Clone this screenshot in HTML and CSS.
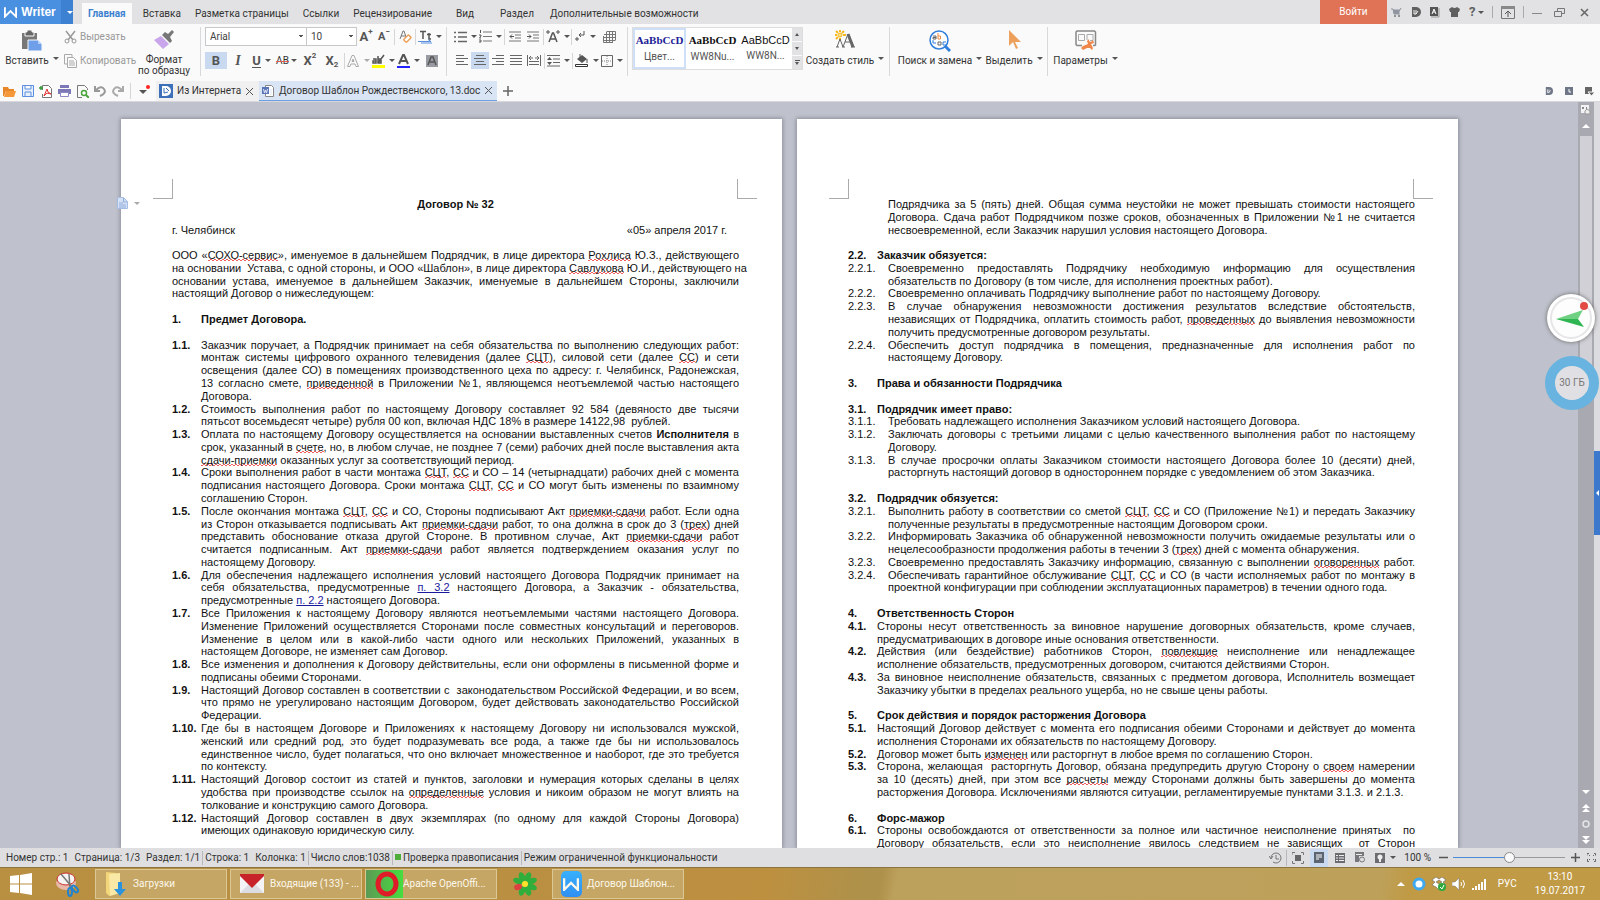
FILE: index.html
```html
<!DOCTYPE html>
<html lang="ru">
<head>
<meta charset="utf-8">
<title>Договор Шаблон Рождественского, 13.doc - Writer</title>
<link rel="stylesheet" href="styles.css">
</head>
<body>
<svg class="defs" aria-hidden="true">
  <symbol id="w" viewBox="0 0 14 12"><path d="M1 1v10L7 5l6 6V1" fill="none" stroke="currentColor" stroke-width="2"/></symbol>
  <symbol id="d" viewBox="0 0 10 10"><path d="M1 0h4a5 5 0 0 1 0 10H1z" fill="currentColor"/><path d="M3 3v4h2l2-3M5 3v4" fill="none" stroke="#eee"/></symbol>
</svg>

<header class="titlebar">
  <button class="brand"><svg width="13" height="12"><use href="#w"/></svg><span>Writer</span><i class="caret"></i></button>
  <nav class="tabs">
    <button class="tab active">Главная</button>
    <button class="tab">Вставка</button>
    <button class="tab">Разметка страницы</button>
    <button class="tab">Ссылки</button>
    <button class="tab">Рецензирование</button>
    <button class="tab wide">Вид</button>
    <button class="tab wide">Раздел</button>
    <button class="tab">Дополнительные возможности</button>
  </nav>
  <button class="login">Войти</button>
  <div class="window">
    <button aria-label="Магазин"><svg width="11" height="11" viewBox="0 0 11 11"><path d="M0 2h2l1 5h6M2 3h7l1-2" fill="none" stroke="#9095a0"/><path d="M2 3h7L8 7H3z" fill="#9095a0"/><circle cx="4" cy="9" r="1" fill="#777"/><circle cx="8" cy="9" r="1" fill="#777"/></svg></button>
    <button aria-label="Docer"><svg width="10" height="10"><use href="#d"/></svg></button>
    <button aria-label="Словарь"><svg width="10" height="11" viewBox="0 0 10 11"><path d="M0 0h8v9H0z" fill="#555"/><path d="M9 1v9H1" fill="none" stroke="#999"/><path d="M2 7l2-5 2 5M3 5h2" fill="none" stroke="#fff"/></svg></button>
    <button aria-label="Тема"><svg width="11" height="10" viewBox="0 0 11 10"><path d="M3 0Q5.500 2 8 0l3 2-1 3H9v5H2V5H1L0 2z" fill="#606060"/></svg></button>
    <button aria-label="Справка" class="help"><b>?</b><i class="caret"></i></button>
    <span class="bar"></span>
    <button aria-label="Скрыть ленту"><svg width="14" height="13" viewBox="0 0 14 13"><path d="M.5.5h13v12H.5z" fill="none" stroke="#777"/><path d="M0 0h14v3H0z" fill="#888"/><path d="M7 11V5M4 8l3-3 3 3" fill="none" stroke="#555"/></svg></button>
    <span class="bar"></span>
    <button aria-label="Свернуть"><svg width="10" height="10"><path d="M0 6.500h10" stroke="#888"/></svg></button>
    <button aria-label="Восстановить" class="restore"><svg width="11" height="9" viewBox="0 0 11 9"><path d="M.5 3.500h7v5h-7zM3.500 3V.5h7v5H8" fill="none" stroke="#777"/></svg></button>
    <button aria-label="Закрыть" class="close"><svg width="9" height="9"><path d="M1 1l7 7M8 1L1 8" stroke="#666" stroke-width="1.500"/></svg></button>
  </div>
</header>

<section class="ribbon">
  <button class="big paste"><svg width="22" height="22" viewBox="0 0 22 22"><path d="M1 3h15v16H1z" fill="#777"/><path d="M4 2h2V0h5v2h2v4H4z" fill="#666" stroke="#fafafa"/><path d="M7 10h10l4 4v7H7z" fill="#6f9fe8" stroke="#fafafa"/><path d="M17 10v4h4" fill="#b8d0f5"/></svg><span>Вставить<i class="caret up"></i></span></button>
  <div class="stack">
    <button class="off"><svg width="13" height="14" viewBox="0 0 13 14"><path d="M2 1l7 9M11 1L4 10" stroke="#999" stroke-width="1.500"/><circle cx="3" cy="11" r="2" fill="none" stroke="#999"/><circle cx="10" cy="11" r="2" fill="none" stroke="#999"/></svg>Вырезать</button>
    <button class="off"><svg width="13" height="14" viewBox="0 0 13 14"><path d="M3 10H.5V.5H8V3M3.500 3.500h6l3 3v7h-9zM5 7h5M5 9h6M5 11h6" fill="none" stroke="#aaa"/></svg>Копировать</button>
  </div>
  <button class="big painter"><svg width="20" height="20" viewBox="0 0 20 20"><path d="M8 5l3-3 3 2 4-4 2 2-4 5 2 4-2 2z" fill="#777"/><path d="M7 6l8 8-6 5L0 10z" fill="#c9a5ec"/></svg><span>Формат<br>по образцу</span></button>
  <hr>
  <div class="rows">
    <div class="row">
      <select class="font" aria-label="Шрифт"><option>Arial</option></select><select class="size" aria-label="Размер"><option>10</option></select>
      <button class="t glyph" aria-label="Увеличить">A<sup>+</sup></button>
      <button class="t glyph small" aria-label="Уменьшить">A<sup>−</sup></button>
      <span class="bar"></span>
      <button class="t" aria-label="Очистить"><svg width="13" height="14" viewBox="0 0 13 14"><path d="M1 9l3-8h1l2 6M2 6h4" fill="none" stroke="#777"/><rect x="5" y="7" width="7" height="4" rx="1" transform="rotate(-45 8 9)" fill="#fff" stroke="#eda15a" stroke-width="1.500"/></svg></button>
      <span class="bar"></span>
      <button class="d" aria-label="Регистр"><svg width="14" height="14" viewBox="0 0 14 14"><path d="M2 1.500h6M5 1v8M11 3v6h2M9 4.500h4" fill="none" stroke="#555" stroke-width="1.500"/><path d="M0 11.500h13l-3-2M14 13H3" fill="none" stroke="#5a90dc"/></svg><i class="caret"></i></button>
    </div>
    <div class="row">
      <button class="n on glyph" aria-label="Полужирный">B</button>
      <button class="n glyph it-g" aria-label="Курсив">I</button>
      <button class="d glyph" aria-label="Подчёркнутый"><span class="under">U</span><i class="caret"></i></button>
      <button class="d strike" aria-label="Зачёркнутый"><s>AB</s><i class="caret"></i></button>
      <button class="n glyph" aria-label="Надстрочный">X<sup>2</sup></button>
      <button class="n glyph" aria-label="Подстрочный">X<sub>2</sub></button>
      <span class="bar"></span>
      <button class="d" aria-label="Эффекты"><svg width="13" height="12" viewBox="0 0 13 12"><path d="M.5 11.500l4.500-11h2l4.500 11H9L8 9H4l-1 2.500zM5 6.500h2L6 4z" fill="none" stroke="#aaa"/></svg><i class="caret pale"></i></button>
      <button class="d" aria-label="Выделение цветом"><svg width="13" height="14" viewBox="0 0 13 14"><path d="M0 11h13v3H0z" fill="#ff0"/><path d="M1 5h3v4H1V7h3M6 2v7h3V5H6M12 1L6 9" fill="none" stroke="#555" stroke-width="1.500"/></svg><i class="caret"></i></button>
      <button class="d" aria-label="Цвет текста"><svg width="13" height="14" viewBox="0 0 13 14"><path d="M0 12h13v2H0z" fill="#22f"/><path d="M2 10l4-9h1l4 9M4 7h5" fill="none" stroke="#555" stroke-width="2"/></svg><i class="caret"></i></button>
      <button class="n" aria-label="Заливка текста"><svg width="12" height="12" viewBox="0 0 12 12"><path d="M0 0h12v12H0z" fill="#999ba3"/><path d="M2 10l3-8h2l3 8M4 7h4" fill="none" stroke="#555" stroke-width="1.500"/></svg></button>
    </div>
  </div>
  <hr>
  <div class="rows">
    <div class="row">
      <button class="d" aria-label="Маркеры"><svg width="13" height="12" viewBox="0 0 13 12"><path d="M4 1.500h9M4 6h9M4 10.500h9M0 1.500h2M0 6h2M0 10.500h2" stroke="#666" stroke-width="1.500"/></svg><i class="caret"></i></button>
      <button class="d" aria-label="Нумерация"><svg width="13" height="13" viewBox="0 0 13 13"><path d="M4 2h9M4 6.500h9M4 11h9" stroke="#777"/><path d="M1.500 0v3M0 5h2v1L.5 8H2M0 10h2v2H0" fill="none" stroke="#555"/></svg><i class="caret"></i></button>
      <span class="bar"></span>
      <button class="t" aria-label="Уменьшить отступ"><svg width="12" height="12" viewBox="0 0 12 12"><path d="M0 1h12M6 4h6M6 7h6M0 10h12" stroke="#777"/><path d="M5 5.500H1M3 3.500l-2 2 2 2" fill="none" stroke="#555"/></svg></button>
      <button class="t" aria-label="Увеличить отступ"><svg width="12" height="12" viewBox="0 0 12 12"><path d="M0 1h12M6 4h6M6 7h6M0 10h12" stroke="#777"/><path d="M0 5.500h4M2 3.500l2 2-2 2" fill="none" stroke="#555"/></svg></button>
      <span class="bar"></span>
      <button class="d" aria-label="Макет текста"><svg width="14" height="13" viewBox="0 0 14 13"><path d="M3 12L6.500 3h1L11 12M4.500 9h5" fill="none" stroke="#555" stroke-width="1.500"/><path d="M0 2h4M2 0v4M10 2h4M12 0v4" stroke="#555"/></svg><i class="caret"></i></button>
      <span class="bar"></span>
      <button class="d" aria-label="Знаки абзаца"><svg width="11" height="12" viewBox="0 0 11 12"><path d="M9 0v4H4M6 2L4 4l2 2M0 8h4M2 6v4" fill="none" stroke="#555"/></svg><i class="caret"></i></button>
      <button class="n" aria-label="Таблица"><svg width="13" height="12" viewBox="0 0 13 12"><path d="M3.500.5h9v9M1 3.500h11M0 6.500h12M0 9.500h12M3.500 1v10M6.500 1v10M9.500 1v10M.5 5v6.500H10" fill="none" stroke="#777"/></svg></button>
    </div>
    <div class="row">
      <button class="t" aria-label="По левому краю"><svg width="12" height="11" viewBox="0 0 12 11"><path d="M0 .5h8M0 3.500h12M0 6.500h8M0 9.500h12" stroke="#666"/></svg></button>
      <button class="t on" aria-label="По центру"><svg width="12" height="11" viewBox="0 0 12 11"><path d="M2 .5h8M0 3.500h12M2 6.500h8M0 9.500h12" stroke="#666"/></svg></button>
      <button class="t" aria-label="По правому краю"><svg width="12" height="11" viewBox="0 0 12 11"><path d="M4 .5h8M0 3.500h12M4 6.500h8M0 9.500h12" stroke="#666"/></svg></button>
      <button class="t" aria-label="По ширине"><svg width="12" height="11" viewBox="0 0 12 11"><path d="M0 .5h12M0 3.500h12M0 6.500h12M0 9.500h12" stroke="#666"/></svg></button>
      <button class="t" aria-label="Распределить"><svg width="14" height="11" viewBox="0 0 14 11"><path d="M.5 0v11M13.500 0v11M2 6.500h10M2 9.500h10M2 3h4M8 3h4M4 1L2 3l2 2M10 1l2 2-2 2" fill="none" stroke="#666"/></svg></button>
      <span class="bar"></span>
      <button class="d" aria-label="Интервал"><svg width="13" height="12" viewBox="0 0 13 12"><path d="M0 .5h13M6 4h7M6 7.500h7M0 11h13" stroke="#666"/><path d="M0 5l2.500-3L5 5zM0 7l2.500 3L5 7z" fill="#555"/></svg><i class="caret"></i></button>
      <span class="bar"></span>
      <button class="d" aria-label="Заливка"><svg width="14" height="13" viewBox="0 0 14 13"><path d="M2 5l5-4 5 4-5 4z" fill="#555"/><path d="M12 5v4M5 3V0" stroke="#555"/><path d="M.5 10.500h12v2H.5z" fill="#fff" stroke="#333"/></svg><i class="caret"></i></button>
      <button class="d" aria-label="Границы"><svg width="12" height="12" viewBox="0 0 12 12"><path d="M.5.5h11v11H.5z" fill="none" stroke="#666"/><path d="M6 1v10M1 6h10" stroke="#888" stroke-dasharray="1 1"/></svg><i class="caret"></i></button>
    </div>
  </div>
  <hr>
  <div class="gallery">
    <button class="style chosen"><b class="navy">AaBbCcD</b><span>Цвет...</span></button>
    <button class="style"><b>AaBbCcD</b><span>WW8Nu...</span></button>
    <button class="style"><b class="sans">AaBbCcD</b><span>WW8N...</span></button>
    <div class="spin"><button aria-label="Вверх"><i class="caret flip"></i></button><button aria-label="Вниз"><i class="caret"></i></button><button aria-label="Все стили" class="more"><i class="caret"></i></button></div>
  </div>
  <button class="big create"><svg width="20" height="20" viewBox="0 0 20 20"><path d="M5 0v2M5 8v3M0 5h2M8 5h3M1 1l2 2M9 1L7 3M1 9l2-2" stroke="#f6b81c" stroke-width="2"/><circle cx="5" cy="5" r="2" fill="#fbe08a" stroke="#f6b81c"/><path d="M2 17l3-8 3 8M8 17l5-13 6 13M10 12h6M1 17h3M7 17h3M16 17h4" fill="none" stroke="#666"/><path d="M13 4l5 13" stroke="#666" stroke-width="3"/></svg><span>Создать стиль<i class="caret up"></i></span></button>
  <hr>
  <button class="big find"><svg width="22" height="22" viewBox="0 0 22 22"><circle cx="10" cy="10" r="9" fill="#fff" stroke="#2f7fdc" stroke-width="1.500"/><path d="M16 16l5 5" stroke="#2f7fdc" stroke-width="3"/><path d="M4 6h3v3H4V7.500h3M9 15v-3h3v3H9" fill="none" stroke="#666"/><path d="M9 3v6h2.500V6H9" fill="none" stroke="#e98b45"/><path d="M4 10v3h3M17 12h-3v3h3" fill="none" stroke="#2f7fdc"/></svg><span>Поиск и замена<i class="caret up"></i></span></button>
  <button class="big select"><svg width="13" height="20" viewBox="0 0 13 20"><path d="M1 0v16l4-4 3 7 2-1-3-6h6z" fill="#eda05c"/></svg><span>Выделить<i class="caret up"></i></span></button>
  <hr>
  <button class="big params"><svg width="22" height="20" viewBox="0 0 22 20"><path d="M7 15.500H2l-1-1V2l1-1h17.500l1 1v13l-1 .5H18" fill="none" stroke="#888" stroke-width="1.500"/><path d="M3.500 4.500h6v6h-6zM12 10V4.500h6v6h-3" fill="none" stroke="#aaa"/><path d="M14 9l-2 2 1 3-5 2-2 2 2 2 4-2 3 0 2 2 1-2-2-4 3-1-1-3-2 2-2-1z" fill="#f0874a"/></svg><span>Параметры<i class="caret up"></i></span></button>
</section>

<section class="docbar">
  <div class="quick">
    <button aria-label="Открыть"><svg width="13" height="11" viewBox="0 0 13 11"><path d="M0 1h5l1 2h5v2H3L1 10H0z" fill="#e8872a"/><path d="M3 5h10l-2 6H1z" fill="#f5983a"/></svg></button>
    <button aria-label="Сохранить"><svg width="12" height="12" viewBox="0 0 12 12"><path d="M.5.5h11v11H.5zM3 1v3h6V1M3 11V7h6v4" fill="#e8f0fc" stroke="#5b90e0"/></svg></button>
    <button aria-label="PDF"><svg width="13" height="13" viewBox="0 0 13 13"><path d="M3.500 5V.5h6l3 3v9h-9V9" fill="#fff" stroke="#777"/><path d="M5 11l3-7 1 3 3 2-4-1z" fill="none" stroke="#e03030"/><path d="M0 3h4M2 1v4" stroke="#3a9b3a" stroke-width="1.500"/></svg></button>
    <button aria-label="Печать"><svg width="13" height="12" viewBox="0 0 13 12"><path d="M2 0h9v3H2zM0 4h13v5H0z" fill="#7c78b8"/><path d="M2.500 7.500h8v4h-8z" fill="#fff" stroke="#8d89c4"/></svg></button>
    <button aria-label="Просмотр"><svg width="12" height="13" viewBox="0 0 12 13"><path d="M5 12.500H.5V.5h7l3 3V5" fill="none" stroke="#777"/><circle cx="7" cy="8" r="2.500" fill="#fff" stroke="#4aa53c" stroke-width="1.500"/><path d="M9 10l3 3" stroke="#4aa53c" stroke-width="2"/></svg></button>
    <button aria-label="Отменить"><svg width="12" height="12" viewBox="0 0 12 12"><path d="M1 1v5h5M2 5q5-5 8-1t-4 7" fill="none" stroke="#999" stroke-width="2"/></svg></button>
    <button aria-label="Повторить"><svg width="12" height="12" viewBox="0 0 12 12"><path d="M11 1v5H6M10 5Q5 0 2 4t4 7" fill="none" stroke="#aaa" stroke-width="2"/></svg></button>
    <span class="bar"></span>
    <button aria-label="Ещё"><svg width="12" height="12" viewBox="0 0 12 12"><path d="M1 5h8L5 9z" fill="#555"/><circle cx="10" cy="2" r="2" fill="#f22"/></svg></button>
  </div>
  <div class="doc web"><svg width="14" height="14" viewBox="0 0 14 14"><path d="M0 0h14v14H0z" fill="#3d70b8"/><path d="M3 2h4a5 5 0 0 1 0 10H3z" fill="#fff"/><path d="M5 4v5l4-1M7 4l3 3" fill="none" stroke="#3d70b8"/></svg><span>Из Интернета</span><button aria-label="Закрыть вкладку"><svg width="7" height="7"><path d="M0 0l7 7M7 0L0 7" stroke="#555"/></svg></button></div>
  <div class="doc current"><svg width="12" height="12" viewBox="0 0 12 12"><path d="M3.500.5h6l2 2v9h-8z" fill="#fff" stroke="#888"/><path d="M0 2h7v7H0z" fill="#5b76b8"/><path d="M1.500 4l1 4 1-3 1 3 1-4M8 5h2M8 7h2M8 9h2" fill="none" stroke="#dfe6f6"/></svg><span>Договор Шаблон Рождественского, 13.doc</span><button aria-label="Закрыть вкладку"><svg width="7" height="7"><path d="M0 0l7 7M7 0L0 7" stroke="#555"/></svg></button></div>
  <button class="add" aria-label="Новая вкладка"><svg width="10" height="10"><path d="M0 5h10M5 0v10" stroke="#666" stroke-width="1.500"/></svg></button>
  <div class="side">
    <button aria-label="Docer"><svg width="8" height="8"><use href="#d"/></svg></button>
    <button aria-label="История"><svg width="8" height="8"><path d="M0 0h8v8H0z" fill="#6e7688"/><path d="M4 2v3h2" fill="none" stroke="#fff"/></svg></button>
    <button aria-label="Список"><svg width="10" height="9"><path d="M0 0h7v5H4v2H0z" fill="#666"/><path d="M3 5h7L6.500 9z" fill="#666" stroke="#fafafa"/></svg></button>
  </div>
</section>

<main class="work">
  <div class="canvas">
    <article class="page">
      <div class="mark tl"></div><div class="mark tr"></div>
      <button class="opts" aria-label="Параметры раздела"><svg width="11" height="12" viewBox="0 0 11 12"><path d="M.5.5h6l4 4v7H.5z" fill="#d5e2f6" stroke="#a5bde4"/><path d="M2 6h4M2 8h7M2 10h7M6.500 1v4H10" fill="none" stroke="#8fabdb"/></svg><i class="caret pale"></i></button>
      <h1>Договор № 32</h1>
      <br>
      <div class="place"><span>г. Челябинск</span><span>«05» апреля 2017 г.</span></div>
      <br>
      <div class="j"><span>ООО «<u>СОХО-сервис</u>», именуемое в дальнейшем Подрядчик, в лице директора <u>Рохлиса</u> Ю.З., действующего</span><span>на основании&nbsp; Устава, с одной стороны, и ООО «Шаблон», в лице директора <u>Савлукова</u> Ю.И., действующего на</span><span>основании устава, именуемое в дальнейшем Заказчик, именуемые в дальнейшем Стороны, заключили</span><span>настоящий Договор о нижеследующем:</span></div>
      <br>
      <h2><b>1.</b>Предмет Договора.</h2>
      <br>
      <div class="it"><b>1.1.</b><div class="j"><span>Заказчик поручает, а Подрядчик принимает на себя обязательства по выполнению следующих работ:</span><span>монтаж системы цифрового охранного телевидения (далее <u>СЦТ</u>), силовой сети (далее <u>СС</u>) и сети</span><span>освещения (далее СО) в помещениях производственного цеха по адресу: г. Челябинск, Радонежская,</span><span>13 согласно смете, <u>приведенной</u> в Приложении №1, являющемся неотъемлемой частью настоящего</span><span>Договора.</span></div></div>
      <div class="it"><b>1.2.</b><div class="j"><span>Стоимость выполнения работ по настоящему Договору составляет 92 584 (девяносто две тысячи</span><span>пятьсот восемьдесят четыре) рубля 00 коп, включая НДС 18% в размере 14122,98&nbsp; рублей.</span></div></div>
      <div class="it"><b>1.3.</b><div class="j"><span>Оплата по настоящему Договору осуществляется на основании выставленных счетов <b>Исполнителя</b> в</span><span>срок, указанный в <u>счете</u>, но, в любом случае, не позднее 7 (семи) рабочих дней после выставления акта</span><span><u>сдачи-приемки</u> оказанных услуг за соответствующий период.</span></div></div>
      <div class="it"><b>1.4.</b><div class="j"><span>Сроки выполнения работ в части монтажа <u>СЦТ</u>, <u>СС</u> и СО – 14 (четырнадцати) рабочих дней с момента</span><span>подписания настоящего Договора. Сроки монтажа <u>СЦТ</u>, <u>СС</u> и СО могут быть изменены по взаимному</span><span>соглашению Сторон.</span></div></div>
      <div class="it"><b>1.5.</b><div class="j"><span>После окончания монтажа <u>СЦТ</u>, <u>СС</u> и СО, Стороны подписывают Акт <u>приемки-сдачи</u> работ. Если одна</span><span>из Сторон отказывается подписывать Акт <u>приемки-сдачи</u> работ, то она должна в срок до 3 (<u>трех</u>) дней</span><span>представить обоснование отказа другой Стороне. В противном случае, Акт <u>приемки-сдачи</u> работ</span><span>считается подписанным. Акт <u>приемки-сдачи</u> работ является подтверждением оказания услуг по</span><span>настоящему Договору.</span></div></div>
      <div class="it"><b>1.6.</b><div class="j"><span>Для обеспечения надлежащего исполнения условий настоящего Договора Подрядчик принимает на</span><span>себя обязательства, предусмотренные <a href="#p32">п. 3.2</a> настоящего Договора, а Заказчик - обязательства,</span><span>предусмотренные <a href="#p22">п. 2.2</a> настоящего Договора.</span></div></div>
      <div class="it"><b>1.7.</b><div class="j"><span>Все Приложения к настоящему Договору являются неотъемлемыми частями настоящего Договора.</span><span>Изменение Приложений осуществляется Сторонами после совместных консультаций и переговоров.</span><span>Изменение в целом или в какой-либо части одного или нескольких Приложений, указанных в</span><span>настоящем Договоре, не изменяет сам Договор.</span></div></div>
      <div class="it"><b>1.8.</b><div class="j"><span>Все изменения и дополнения к Договору действительны, если они оформлены в письменной форме и</span><span>подписаны обеими Сторонами.</span></div></div>
      <div class="it"><b>1.9.</b><div class="j"><span>Настоящий Договор составлен в соответствии с&nbsp; законодательством Российской Федерации, и во всем,</span><span>что прямо не урегулировано настоящим Договором, будет действовать законодательство Российской</span><span>Федерации.</span></div></div>
      <div class="it"><b>1.10.</b><div class="j"><span>Где бы в настоящем Договоре и Приложениях к настоящему Договору ни использовался мужской,</span><span>женский или средний род, это будет подразумевать все рода, а также где бы ни использовалось</span><span>единственное число, будет полагаться, что оно включает множественное и наоборот, где это требуется</span><span>по контексту.</span></div></div>
      <div class="it"><b>1.11.</b><div class="j"><span>Настоящий Договор состоит из статей и пунктов, заголовки и нумерация которых сделаны в целях</span><span>удобства при производстве ссылок на <u>определенные</u> условия и никоим образом не могут влиять на</span><span>толкование и конструкцию самого Договора.</span></div></div>
      <div class="it"><b>1.12.</b><div class="j"><span>Настоящий Договор составлен в двух экземплярах (по одному для каждой Стороны Договора)</span><span>имеющих одинаковую юридическую силу.</span></div></div>
    </article>
    <article class="page">
      <div class="mark tl"></div><div class="mark tr"></div>
      <div class="it sub"><span></span><div class="j"><span>Подрядчика за 5 (пять) дней. Общая сумма неустойки не может превышать стоимости настоящего</span><span>Договора. Сдача работ Подрядчиком позже сроков, обозначенных в Приложении №1 не считается</span><span>несвоевременной, если Заказчик нарушил условия настоящего Договора.</span></div></div>
      <br>
      <h2 id="p22"><b>2.2.</b>Заказчик обязуется:</h2>
      <div class="it sub"><span>2.2.1.</span><div class="j"><span>Своевременно предоставлять Подрядчику необходимую информацию для осуществления</span><span>обязательств по Договору (в том числе, для исполнения проектных работ).</span></div></div>
      <div class="it sub"><span>2.2.2.</span><div class="j"><span>Своевременно оплачивать Подрядчику выполнение работ по настоящему Договору.</span></div></div>
      <div class="it sub"><span>2.2.3.</span><div class="j"><span>В случае обнаружения невозможности достижения результатов вследствие обстоятельств,</span><span>независящих от Подрядчика, оплатить стоимость работ, <u>проведенных</u> до выявления невозможности</span><span>получить предусмотренные договором результаты.</span></div></div>
      <div class="it sub"><span>2.2.4.</span><div class="j"><span>Обеспечить доступ подрядчика в помещения, предназначенные для исполнения работ по</span><span>настоящему Договору.</span></div></div>
      <br>
      <h2><b>3.</b>Права и обязанности Подрядчика</h2>
      <br>
      <h2><b>3.1.</b>Подрядчик имеет право:</h2>
      <div class="it sub"><span>3.1.1.</span><div class="j"><span>Требовать надлежащего исполнения Заказчиком условий настоящего Договора.</span></div></div>
      <div class="it sub"><span>3.1.2.</span><div class="j"><span>Заключать договоры с третьими лицами с целью качественного выполнения работ по настоящему</span><span>Договору.</span></div></div>
      <div class="it sub"><span>3.1.3.</span><div class="j"><span>В случае просрочки оплаты Заказчиком стоимости настоящего Договора более 10 (десяти) дней,</span><span>расторгнуть настоящий договор в одностороннем порядке с уведомлением об этом Заказчика.</span></div></div>
      <br>
      <h2 id="p32"><b>3.2.</b>Подрядчик обязуется:</h2>
      <div class="it sub"><span>3.2.1.</span><div class="j"><span>Выполнить работу в соответствии со сметой <u>СЦТ</u>, <u>СС</u> и СО (Приложение №1) и передать Заказчику</span><span>полученные результаты в предусмотренные настоящим Договором сроки.</span></div></div>
      <div class="it sub"><span>3.2.2.</span><div class="j"><span>Информировать Заказчика об обнаруженной невозможности получить ожидаемые результаты или о</span><span>нецелесообразности продолжения работы в течении 3 (<u>трех</u>) дней с момента обнаружения.</span></div></div>
      <div class="it sub"><span>3.2.3.</span><div class="j"><span class="full">Своевременно предоставлять Заказчику информацию, связанную с выполнении <u>оговоренных</u> работ.</span></div></div>
      <div class="it sub"><span>3.2.4.</span><div class="j"><span>Обеспечивать гарантийное обслуживание <u>СЦТ</u>, <u>СС</u> и СО (в части исполняемых работ по монтажу в</span><span>проектной конфигурации при соблюдении эксплуатационных параметров) в течении одного года.</span></div></div>
      <br>
      <h2><b>4.</b>Ответственность Сторон</h2>
      <div class="it"><b>4.1.</b><div class="j"><span>Стороны несут ответственность за виновное нарушение договорных обязательств, кроме случаев,</span><span>предусматривающих в договоре иные основания ответственности.</span></div></div>
      <div class="it"><b>4.2.</b><div class="j"><span>Действия (или бездействие) работников Сторон, <u>повлекшие</u> неисполнение или ненадлежащее</span><span>исполнение обязательств, предусмотренных договором, считаются действиями Сторон.</span></div></div>
      <div class="it"><b>4.3.</b><div class="j"><span>За виновное неисполнение обязательств, связанных с предметом договора, Исполнитель возмещает</span><span>Заказчику убытки в пределах реального ущерба, но не свыше цены работы.</span></div></div>
      <br>
      <h2><b>5.</b>Срок действия и порядок расторжения Договора</h2>
      <div class="it"><b>5.1.</b><div class="j"><span>Настоящий Договор действует с момента его подписания обеими Сторонами и действует до момента</span><span>исполнения Сторонами их обязательств по настоящему Договору.</span></div></div>
      <div class="it"><b>5.2.</b><div class="j"><span>Договор может быть <u>изменен</u> или расторгнут в любое время по соглашению Сторон.</span></div></div>
      <div class="it"><b>5.3.</b><div class="j"><span>Сторона, желающая&nbsp; расторгнуть Договор, обязана предупредить другую Сторону о <u>своем</u> намерении</span><span>за 10 (десять) дней, при этом все <u>расчеты</u> между Сторонами должны быть завершены до момента</span><span>расторжения Договора. Исключениями являются ситуации, регламентируемые пунктами 3.1.3. и 2.1.3.</span></div></div>
      <br>
      <h2><b>6.</b>Форс-мажор</h2>
      <div class="it"><b>6.1.</b><div class="j"><span>Стороны освобождаются от ответственности за полное или частичное неисполнение принятых&nbsp; по</span><span class="full">Договору обязательств, если это неисполнение явилось следствием не зависящих&nbsp; от Сторон</span></div></div>
    </article>
  </div>
  <div class="scroll">
    <button aria-label="Вид линейки"><svg width="10" height="10" viewBox="0 0 10 10"><path d="M0 0h8v8H0z" fill="#f2f2f4"/><path d="M1 2h2v2H1zM5 2h1v2H5z" fill="#888"/><path d="M4 9V6l2-2 3 2v3z" fill="#eee" stroke="#999"/></svg></button>
    <button aria-label="Вверх"><i class="caret flip white"></i></button>
    <div class="thumb"></div>
    <div class="track"></div>
    <button aria-label="Вниз"><i class="caret white"></i></button>
    <button aria-label="Предыдущая страница"><svg width="8" height="8"><path d="M0 4l4-4 4 4zM0 8l4-4 4 4z" fill="#fff"/></svg></button>
    <button aria-label="Объект"><svg width="8" height="8"><circle cx="4" cy="4" r="3" fill="none" stroke="#e4e4e8" stroke-width="1.500"/></svg></button>
    <button aria-label="Следующая страница"><svg width="8" height="8"><path d="M0 0l4 4 4-4zM0 4l4 4 4-4z" fill="#fff"/></svg></button>
  </div>
  <div class="edge"><button aria-label="Открыть панель"><svg width="4" height="6"><path d="M4 0v6L1 3z" fill="#fff"/></svg></button></div>
  <button class="send" aria-label="Отправить"><svg width="48" height="48" viewBox="0 0 48 48"><circle cx="24" cy="24" r="20" fill="#fdfdfd" stroke="#e6e6e8" stroke-width="2"/><path d="M9 25l28 8-6-8z" fill="#2fb552"/><path d="M9 25l27-9-5 9z" fill="#6ed080"/><circle cx="37" cy="12" r="4" fill="#e14b43"/></svg></button>
  <div class="space">30 ГБ</div>
</main>

<footer class="status">
  <span>Номер стр.: 1</span><span>Страница: 1/3</span><span>Раздел: 1/1</span><span class="bar"></span>
  <span>Строка: 1</span><span>Колонка: 1</span><span class="bar"></span>
  <span>Число слов:1038</span><span class="bar"></span>
  <span class="spell">Проверка правописания</span><span class="bar"></span>
  <span>Режим ограниченной функциональности</span>
  <div class="views">
    <button aria-label="История"><svg width="13" height="12" viewBox="0 0 13 12"><path d="M2 6a5 5 0 1 1 2 4M0 4l2 3 2-3M7 3v4h3" fill="none" stroke="#777"/></svg></button>
    <span class="bar"></span>
    <button aria-label="Полный экран"><svg width="12" height="12" viewBox="0 0 12 12"><path d="M3 3h6v6H3z" fill="#666"/><path d="M0 3V.5h3M9 .5h2.500V3M11.500 9v2.500H9M3 11.500H.5V9" fill="none" stroke="#777"/></svg></button>
    <button aria-label="Разметка" class="on"><svg width="10" height="11"><path d="M0 0h10v11H0z" fill="#5b6470"/><path d="M2 3h6M2 5h6M2 7h3" stroke="#fff"/></svg></button>
    <button aria-label="Структура"><svg width="10" height="10"><path d="M0 0h10v10H0z" fill="#6b6b70"/><path d="M1 2.500h2M4 2.500h5M1 5h2M4 5h5M1 7.500h2M4 7.500h5" stroke="#eee"/></svg></button>
    <button aria-label="Веб"><svg width="10" height="11"><path d="M0 0h9v4H4v6H0z" fill="#77777c"/><path d="M1 2.500h6" stroke="#eee"/><circle cx="7" cy="7.500" r="2.500" fill="none" stroke="#777"/></svg></button>
    <button aria-label="Защита"><svg width="10" height="10"><path d="M0 0h10v10H0z" fill="#6b6b70"/><circle cx="5" cy="4" r="2.500" fill="#eee"/><path d="M4 6h2v3H4z" fill="#eee"/></svg></button>
    <i class="caret"></i>
    <label for="zoom">100 %</label>
    <button class="step" aria-label="Уменьшить"><svg width="9" height="9"><path d="M0 4.500h9" stroke="#555" stroke-width="1.500"/></svg></button>
    <input id="zoom" type="range" min="0" max="100" value="50">
    <button class="step" aria-label="Увеличить"><svg width="9" height="9"><path d="M0 4.500h9M4.500 0v9" stroke="#555" stroke-width="1.500"/></svg></button>
    <button class="step" aria-label="Вписать"><svg width="9" height="9"><path d="M0 2.500V.5h2M7 .5h1.500v2M8.500 6v2.500H7M2 8.500H.5V6M2 2l1 1M7 2L6 3M2 7l1-1M7 7L6 6" fill="none" stroke="#666"/></svg></button>
  </div>
</footer>

<footer class="taskbar">
  <button class="start" aria-label="Пуск"><svg width="22" height="22" viewBox="0 0 22 22"><path d="M0 3l9-1v8.500H0zM10 2l12-2v10.500H10zM0 11.500h9V20l-9-1zM10 11.500h12V22l-12-2z" fill="#fff"/></svg></button>
  <button class="pin" aria-label="Ножницы"><svg width="24" height="25" viewBox="0 0 24 25"><ellipse cx="11" cy="11" rx="10" ry="7" fill="#e8b8a8"/><ellipse cx="11" cy="7" rx="9" ry="6" fill="#f6f3f3" stroke="#c92d2d"/><path d="M6 2l11 13M14 2l1 15" stroke="#777" stroke-width="1.500"/><ellipse cx="15" cy="20" rx="2" ry="4" fill="none" stroke="#2183d0" stroke-width="2"/><ellipse cx="20" cy="17" rx="2" ry="4" transform="rotate(-40 20 17)" fill="none" stroke="#2183d0" stroke-width="2"/></svg></button>
  <button class="task"><svg width="24" height="26" viewBox="0 0 24 26"><path d="M2 1l10 1v20l-7 3-3-3z" fill="#f2d679"/><path d="M5 3l11-1v20L6 25z" fill="#fae9a6"/><path d="M14 11h4v7h4l-6 7-6-7h4z" fill="#2b93dd"/></svg><span>Загрузки</span></button>
  <button class="task"><svg width="26" height="20" viewBox="0 0 26 20"><path d="M1 1h24v18H1z" fill="#f4f4f6"/><path d="M1 19l9-9h6l9 9z" fill="#dcdce2"/><path d="M1 0h24v2L13 14 1 2z" fill="#c8232b"/></svg><span>Входящие (133) - ...</span></button>
  <button class="task opera"><svg width="26" height="26" viewBox="0 0 26 26"><ellipse cx="13" cy="13" rx="9" ry="10" fill="none" stroke="#df1c28" stroke-width="5"/></svg><span>Apache OpenOffi...</span></button>
  <button class="pin icq" aria-label="ICQ"><svg width="24" height="24" viewBox="0 0 24 24"><g fill="#2fae3c"><ellipse cx="9" cy="5" rx="3" ry="5" transform="rotate(-20 9 5)"/><ellipse cx="15" cy="5" rx="3" ry="5" transform="rotate(20 15 5)"/><ellipse cx="19" cy="9" rx="5" ry="3" transform="rotate(-20 19 9)"/><ellipse cx="19" cy="15" rx="5" ry="3" transform="rotate(20 19 15)"/><ellipse cx="15" cy="19" rx="3" ry="5" transform="rotate(-20 15 19)"/><ellipse cx="9" cy="19" rx="3" ry="5" transform="rotate(20 9 19)"/><ellipse cx="5" cy="9" rx="5" ry="3" transform="rotate(20 5 9)"/></g><ellipse cx="5" cy="15" rx="4" ry="3" transform="rotate(-20 5 15)" fill="#dc4040"/><circle cx="12" cy="12" r="3" fill="#ffe22c"/></svg></button>
  <button class="task wps"><span class="wlogo"><svg width="16" height="14"><use href="#w"/></svg></span><span>Договор Шаблон...</span></button>
  <div class="tray">
    <i class="caret flip white"></i>
    <svg width="14" height="14"><circle cx="7" cy="7" r="5" fill="#fff" stroke="#3fa8ee" stroke-width="3"/></svg>
    <svg width="14" height="14" viewBox="0 0 14 14"><path d="M4 0l3 2 3-2 4 3-3 2 3 3-4 2-3 3-3-3-4-2 3-3-3-2zM7 3L4 5l3 2 3-2z" fill="#fff" stroke="#555" stroke-width=".5"/><circle cx="10" cy="10" r="4" fill="#2fa83c"/><path d="M8 10l2 2 2-4" fill="none" stroke="#fff"/></svg>
    <svg width="14" height="12" viewBox="0 0 14 12"><path d="M0 4h3l4-4v12L3 8H0z" fill="#fff" stroke="#777" stroke-width=".5"/><path d="M9 4q1 2 0 4M11 2q3 4 0 8" fill="none" stroke="#fff"/></svg>
    <svg width="14" height="11" viewBox="0 0 14 11"><path d="M1 11V9M4 11V7M7 11V5M10 11V3M13 11V0" stroke="#fff" stroke-width="2"/></svg>
    <span class="lang">РУС</span>
    <time><span>13:10</span><span>19.07.2017</span></time>
  </div>
</footer>
</body>
</html>
```
FILE: styles.css
```css
* { box-sizing: border-box; }
body {
  margin: 0;
  height: 100vh;
  display: flex;
  flex-direction: column;
  overflow: hidden;
  font-family: Roboto, "Noto Sans", sans-serif;
  font-size: 10px;
  line-height: 16px;
  color: #333;
  background: #fafafa;
}
button {
  display: flex;
  align-items: center;
  justify-content: center;
  margin: 0;
  padding: 0;
  border: 0;
  background: none;
  font: inherit;
  color: inherit;
  white-space: nowrap;
}
svg { display: block; flex: none; }
.defs { position: absolute; width: 0; height: 0; }
.bar { width: 1px; height: 16px; margin: 0 1px; background: #d6d6d8; flex: none; }
.caret {
  display: inline-block;
  flex: none;
  width: 0;
  border: 3px solid transparent;
  border-top: 3px solid #555;
  border-bottom: 0;
}
.caret.up { margin-left: 4px; vertical-align: 4px; }
.caret.flip { border-top: 0; border-bottom: 3px solid #555; }
.caret.pale { border-top-color: #aaa; }
.caret.white { border-width: 4px; border-top-color: #fff; border-bottom-width: 0; }
.caret.flip.white { border-top-width: 0; border-bottom: 4px solid #fff; }

/* Title bar */
.titlebar { display: flex; height: 24px; background: #e2e2e4; flex: none; }
.brand {
  width: 73px;
  padding-left: 4px;
  gap: 4px;
  color: #fff;
  background: linear-gradient(90deg, #4a90e0 61px, #3d82d2 61px);
  font: bold 12px "Liberation Sans", sans-serif;
}
.brand .caret { border-top-color: #fff; margin-left: 7px; }
.tabs { display: flex; flex: 1; padding: 3px 0 0 9px; }
.tab { padding: 0 7px; height: 22px; }
.tab.active { padding: 0 6px; margin-right: 4px; background: #fafafa; color: #3a82d0; font-weight: bold; }
.tab.wide { min-width: 52px; }
.login { width: 67px; background: #e07356; color: #fff; }
.window { display: flex; align-items: center; width: 213px; padding-left: 4px; gap: 9px; color: #606060; }
.window .bar { height: 12px; margin: 0 -1px; background: #aaa; }
.help { gap: 3px; }
.help b { font-size: 13px; }
.restore { margin-left: 3px; }
.close { margin-left: 6px; }

/* Ribbon */
.ribbon { display: flex; height: 57px; padding-top: 3px; flex: none; align-items: flex-start; }
.ribbon hr { width: 1px; height: 49px; margin: 0 4px 0 3px; border: 0; background: #d9d9db; flex: none; }
.big { flex-direction: column; justify-content: flex-start; height: 49px; padding-top: 3px; }
.big span { margin-top: auto; line-height: 11px; }
.paste, .create, .find, .select, .params { padding-bottom: 10px; }
.paste { width: 60px; padding-left: 4px; }
.painter { width: 58px; margin-right: 4px; }
.stack { display: flex; flex-direction: column; width: 75px; gap: 8px; padding: 2px 0 0 4px; }
.off { justify-content: flex-start; gap: 3px; color: #999; }
.rows { display: flex; flex-direction: column; gap: 5px; }
.rows + hr + .rows { margin-left: 2px; }
.row { display: flex; align-items: center; height: 19px; }
.row button { height: 17px; }
.t { width: 18px; }
.n { width: 22px; }
.d { width: 25px; gap: 4px; }
.on, .row .on { background: #c9daf0; }
.glyph { font-size: 13px; font-weight: bold; color: #555; }
.glyph.small { font-size: 11px; }
.glyph sup, .glyph sub { font-size: 8px; line-height: 8px; }
.glyph sup { align-self: flex-start; }
.glyph sub { align-self: flex-end; }
.under { line-height: 13px; border-bottom: 1px solid #555; }
.it-g { font-family: "Liberation Serif", serif; font-style: italic; font-size: 14px; }
.strike { gap: 2px; }
.strike s { text-decoration-color: #e05a50; }
.row select {
  height: 19px;
  padding: 0 6px 0 4px;
  border: 1px solid #c8c8ca;
  border-radius: 0;
  color: #444;
  font: 10px Roboto, "Noto Sans", sans-serif;
  appearance: none;
  background-color: #fff;
  background-image: linear-gradient(-135deg, #555 50%, transparent 50%), linear-gradient(135deg, #555 50%, transparent 50%);
  background-size: 3px 3px;
  background-position: right 5px center, right 2px center;
  background-repeat: no-repeat;
}
.font { width: 102px; }
.size { width: 51px; margin-left: -1px; }
.gallery { display: flex; height: 43px; border: 1px solid #ddd; background: #fff; }
.style { flex-direction: column; width: 53px; border: 2px solid transparent; color: #555; gap: 2px; overflow: hidden; }
.style.chosen { border-color: #cfdff8; }
.style b { font: bold 11px "Liberation Serif", serif; color: #111; line-height: 14px; }
.style b.navy { color: #1c1c96; }
.style b.sans { font: 11px "Liberation Sans", sans-serif; }
.spin { display: flex; flex-direction: column; width: 10px; gap: 1px; background: #fafafa; }
.spin button { flex: 1; background: #e2e2e4; }
.spin .caret { border-left-width: 2px; border-right-width: 2px; }
.spin .more { flex-direction: column; gap: 1px; }
.spin .more::before { content: ""; width: 5px; height: 1px; background: #555; }
.create { width: 82px; margin-left: 1px; }
.find { width: 88px; margin-left: 2px; }
.select { width: 60px; }
.params { width: 67px; }

/* Document tabs */
.docbar { display: flex; height: 21px; border-bottom: 1px solid #d8d8dc; flex: none; }
.quick { display: flex; align-items: center; width: 156px; padding: 0 6px 0 3px; justify-content: space-between; }
.doc { display: flex; align-items: center; gap: 4px; padding: 0 6px 0 3px; background: #f0f0f0; white-space: nowrap; }
.doc button { width: 9px; height: 12px; margin-left: auto; }
.web { width: 103px; }
.current { width: 238px; gap: 5px; background: #d9e4f4; border-bottom: 1px solid #6c9fe0; }
.add { width: 22px; }
.side { display: flex; align-items: center; gap: 12px; margin-left: auto; padding-right: 5px; color: #6e7688; }

/* Work area */
.work { display: flex; flex: 1; min-height: 0; position: relative; background: #bfc2cc; }
.canvas { display: flex; flex: 1; gap: 15px; padding: 17px 120px 0 121px; overflow: hidden; }
.page {
  position: relative;
  flex: 1;
  min-width: 0;
  padding: 79px 43px 0 51px;
  background: #fff;
  box-shadow: 0 0 4px 1px #8c8f9c;
  color: #111;
  font-family: "Liberation Sans", Arial, sans-serif;
  font-size: 11px;
  line-height: 1.163;
}
.page h1, .page h2 { margin: 0; font-size: 11px; font-weight: bold; }
.page h1 { text-align: center; }
.page h2 { display: flex; }
.page h2 b { flex: 0 0 29px; }
.place { display: flex; justify-content: space-between; padding-right: 12px; }
.it { display: flex; }
.it > b { flex: 0 0 29px; }
.sub > span { flex: 0 0 40px; }
.it > .j { flex: 1; min-width: 0; }
.j > span { display: block; text-align-last: justify; white-space: nowrap; }
.j > span:last-child { text-align-last: left; }
.j > span.full { text-align-last: justify; }
.page u {
  text-decoration: none;
  background:
    repeating-linear-gradient(90deg, #f06060 0 2px, transparent 2px 4px) 0 100% / 100% 1px no-repeat,
    repeating-linear-gradient(90deg, transparent 0 2px, #f06060 2px 4px) 0 calc(100% - 1px) / 100% 1px no-repeat;
}
.page a { color: #1a1a9c; }
.mark { position: absolute; top: 60px; width: 20px; height: 20px; border-bottom: 1px solid #aaa; }
.mark.tl { left: 32px; border-right: 1px solid #aaa; }
.mark.tr { right: 25px; border-left: 1px solid #aaa; }
.opts { position: absolute; left: -4px; top: 78px; gap: 6px; }
.scroll { display: flex; flex-direction: column; align-items: center; width: 16px; background: #a9a9b1; }
.scroll button { width: 16px; height: 16px; }
.scroll .thumb { width: 12px; flex: 0 0 246px; margin-top: 2px; background: #d0d0d6; }
.scroll .track { flex: 1; }
.edge { display: flex; align-items: center; width: 6px; background: #dcdce0; }
.edge button { width: 6px; height: 84px; margin-top: 36px; background: #3c78cc; }
.send {
  position: absolute;
  right: 5px;
  top: 192px;
  border-radius: 50%;
  background: #fff;
  box-shadow: 0 0 4px #666;
}
.space {
  position: absolute;
  right: 1px;
  top: 254px;
  width: 54px;
  height: 54px;
  border: 10px solid #68b3df;
  border-radius: 50%;
  background: #e0e0e4;
  color: #777;
  line-height: 34px;
  text-align: center;
  white-space: nowrap;
}

/* Status bar */
.status { display: flex; align-items: center; gap: 6px; height: 19px; padding-left: 6px; background: #dfdfe1; flex: none; white-space: nowrap; }
.status > .bar { margin: 0 -4px; background: #b8b8bc; height: 14px; }
.spell::before { content: ""; display: inline-block; width: 6px; height: 6px; margin-right: 2px; vertical-align: 1px; background: #4fae3a; }
.views { display: flex; align-items: center; margin-left: auto; padding-right: 1px; }
.views button { width: 20px; height: 18px; }
.views .bar { background: #b8b8bc; }
.views .on { width: 18px; margin: 0 2px; }
.views label { margin: 0 4px 0 8px; }
.views .step { width: 16px; }
.views input {
  width: 112px;
  height: 12px;
  margin: 0 2px;
  appearance: none;
  background: linear-gradient(90deg, #4a8ad8 50%, #999 50%) center / 100% 1px no-repeat;
}
.views input::-webkit-slider-thumb { appearance: none; width: 11px; height: 11px; border: 1px solid #888; border-radius: 50%; background: #fafafa; }

/* Taskbar */
.taskbar {
  display: flex;
  align-items: stretch;
  height: 33px;
  padding: 1px 0;
  flex: none;
  color: #fff;
  border-top: 1px solid #8c7440;
  background: linear-gradient(100deg, #b98f42 0 28%, #bd9040 48%, #ae914a 54% 55%, #bca15c 56%, #bda15b 86%, #c09a45 88%);
}
.start { width: 42px; }
.pin { width: 49px; margin-right: 4px; }
.task {
  width: 132px;
  margin-right: 3px;
  padding: 0 8px;
  gap: 5px;
  justify-content: flex-start;
  border: 1px solid #dcc897;
  background: #c5a665;
  color: #fdf8ec;
}
.opera { background: linear-gradient(90deg, #5d9a55, #46dd3e 37px, #c5a665 37px); gap: 3px; }
.pin.icq { margin-right: 3px; }
.wlogo { display: flex; align-items: center; justify-content: center; width: 26px; height: 26px; border-radius: 5px; background: linear-gradient(#38b0fc, #2f8ff2); }
.tray { display: flex; align-items: center; gap: 6px; margin-left: auto; padding-right: 15px; }
.tray .caret { margin-right: 1px; }
.lang { margin: 0 12px 0 6px; }
.tray time { display: flex; flex-direction: column; align-items: center; line-height: 14px; }
```
